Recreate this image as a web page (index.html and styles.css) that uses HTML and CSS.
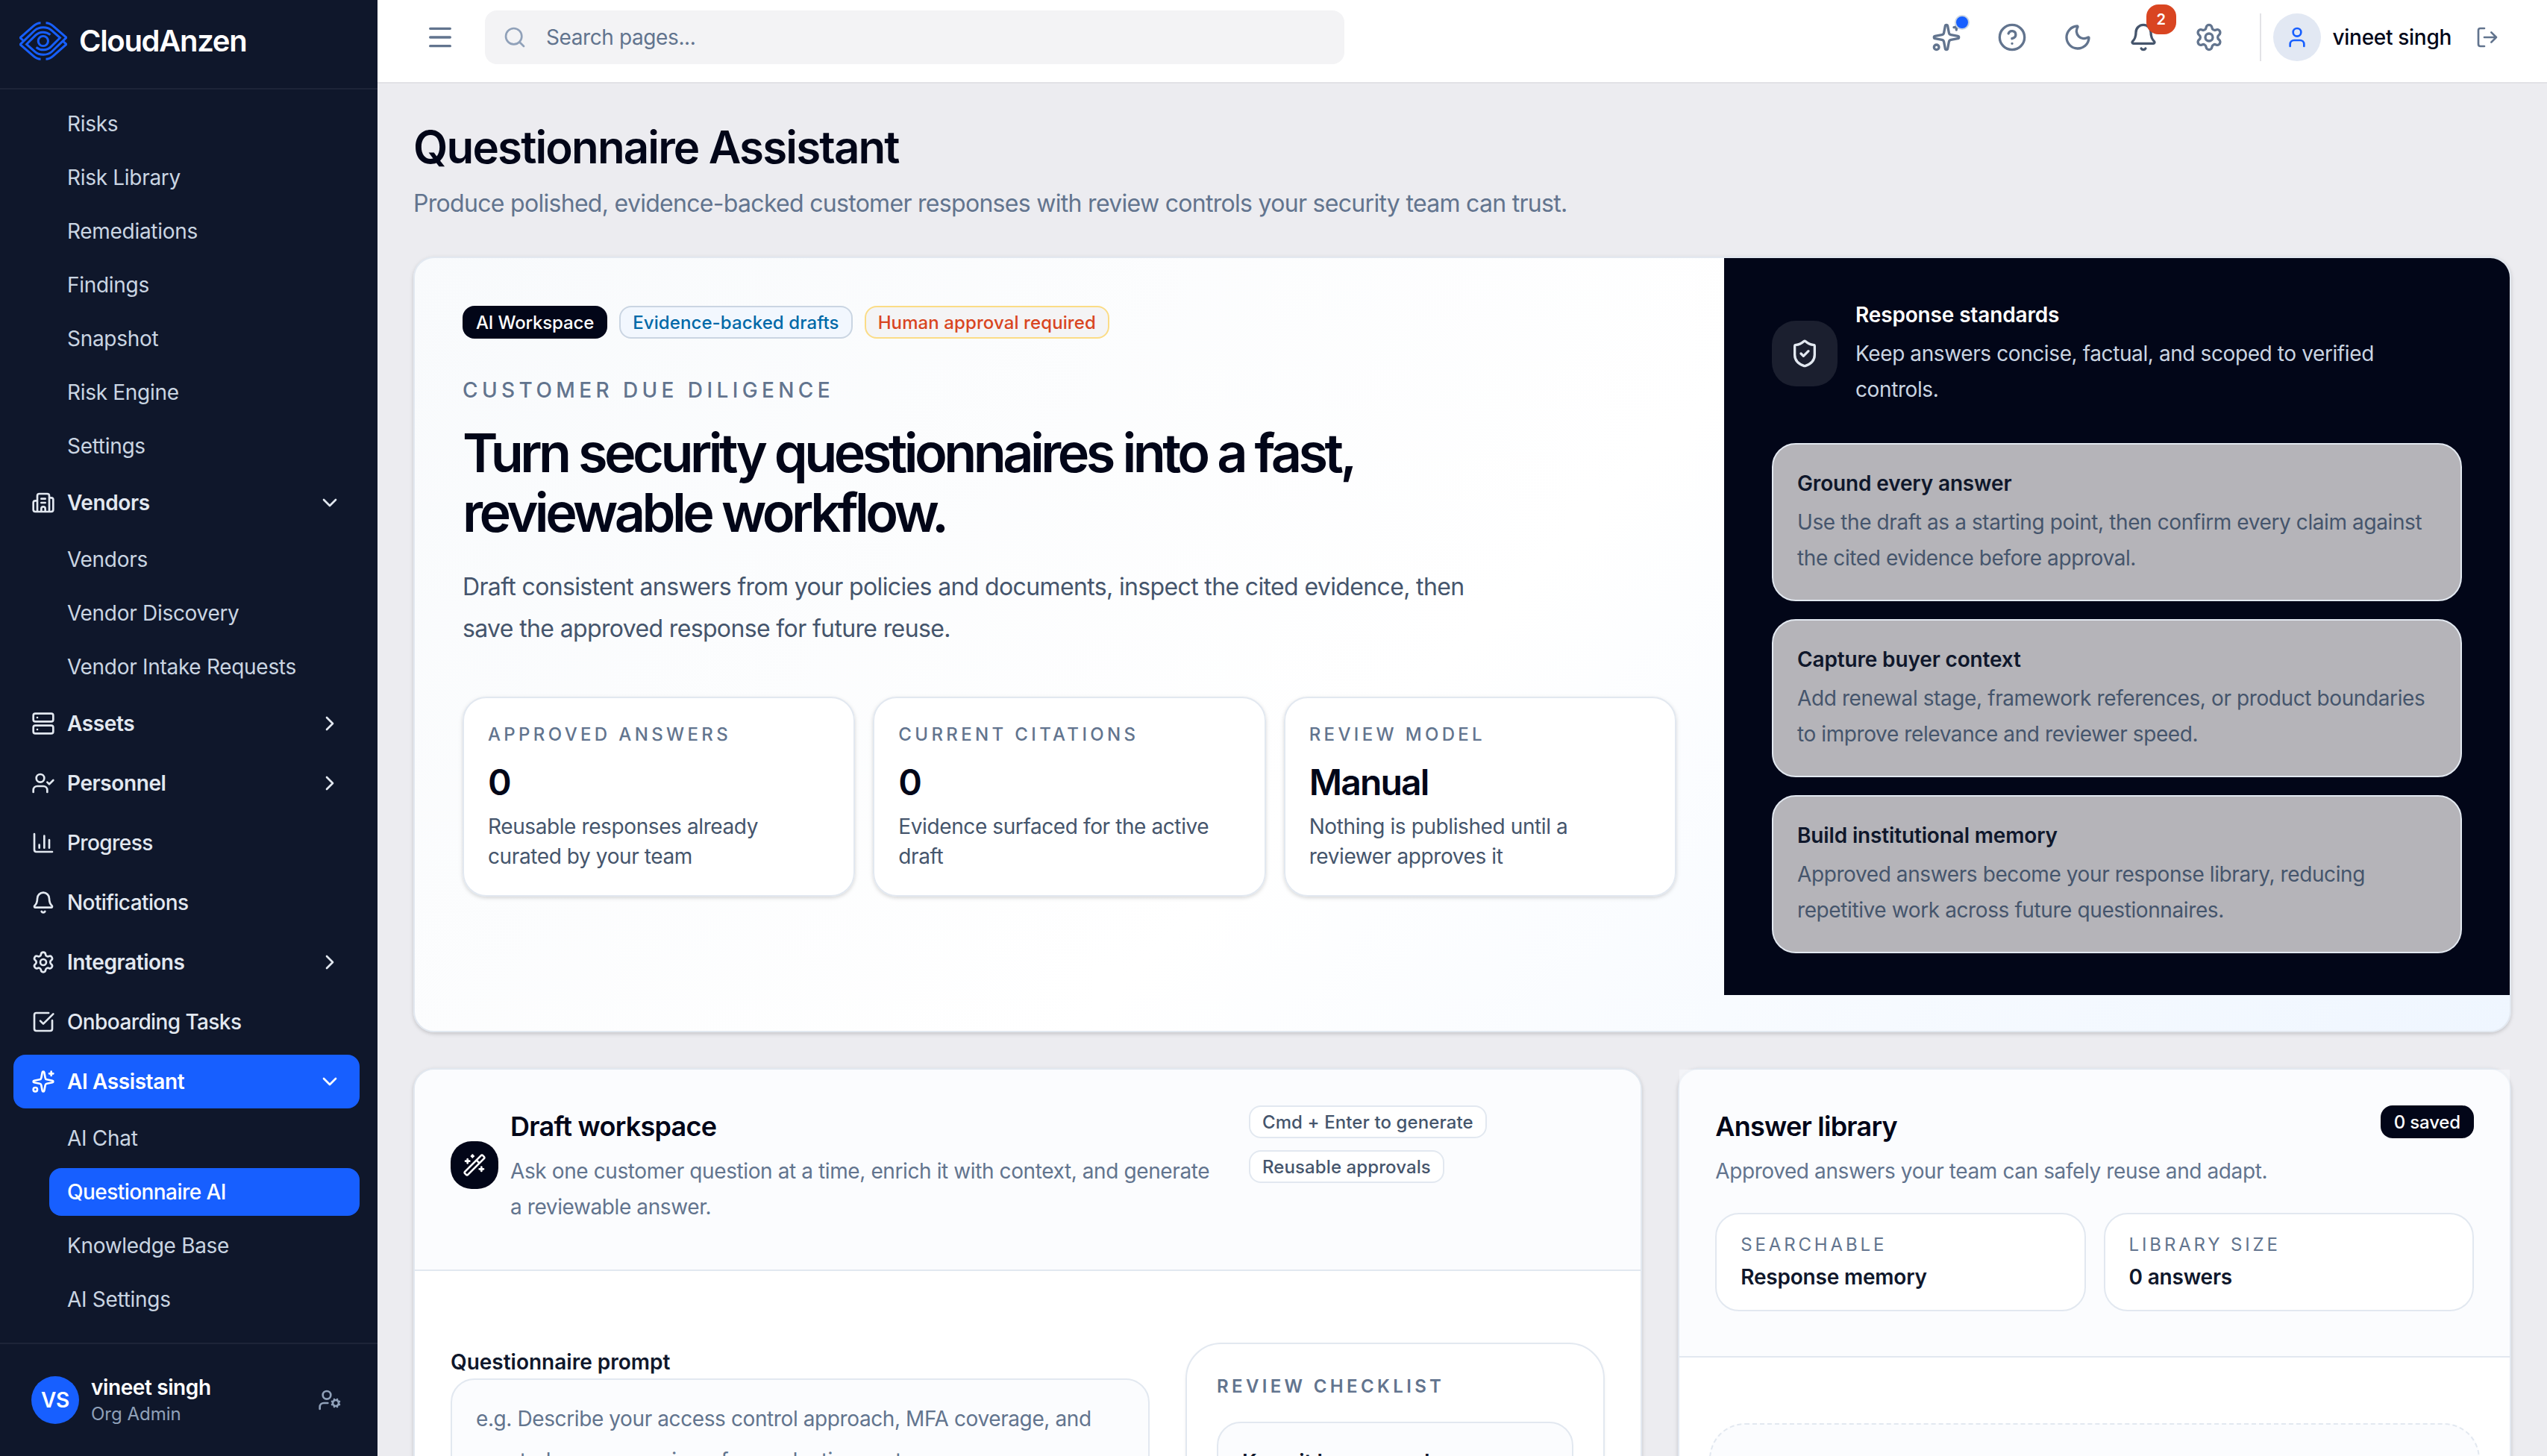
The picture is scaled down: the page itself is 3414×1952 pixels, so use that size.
FILE: index.html
```html
<!DOCTYPE html>
<html lang="en">
<head>
    <meta charset="UTF-8">
    <title>CloudAnzen - Questionnaire Assistant</title>
    <link rel="stylesheet" href="styles.css">
</head>
<body>
    <svg class="sprite" width="0" height="0">
        <symbol id="menu" viewBox="0 0 24 24"><path d="M4 5h16M4 12h16M4 19h16"/></symbol>
        <symbol id="search" viewBox="0 0 24 24"><path d="m21 21-4.34-4.34"/><circle cx="11" cy="11" r="8"/></symbol>
        <symbol id="sparkles" viewBox="0 0 24 24"><path d="M11.017 2.814a1 1 0 0 1 1.966 0l1.051 5.558a2 2 0 0 0 1.594 1.594l5.558 1.051a1 1 0 0 1 0 1.966l-5.558 1.051a2 2 0 0 0-1.594 1.594l-1.051 5.558a1 1 0 0 1-1.966 0l-1.051-5.558a2 2 0 0 0-1.594-1.594l-5.558-1.051a1 1 0 0 1 0-1.966l5.558-1.051a2 2 0 0 0 1.594-1.594zM20 2v4M22 4h-4"/><circle cx="4" cy="20" r="2"/></symbol>
        <symbol id="help" viewBox="0 0 24 24"><circle cx="12" cy="12" r="10"/><path d="M9.09 9a3 3 0 0 1 5.83 1c0 2-3 3-3 3M12 17h.01"/></symbol>
        <symbol id="moon" viewBox="0 0 24 24"><path d="M20.985 12.486a9 9 0 1 1-9.473-9.472c.405-.022.617.46.402.803a6 6 0 0 0 8.268 8.268c.344-.215.825-.004.803.401"/></symbol>
        <symbol id="bell" viewBox="0 0 24 24"><path d="M10.268 21a2 2 0 0 0 3.464 0M3.262 15.326A1 1 0 0 0 4 17h16a1 1 0 0 0 .74-1.673C19.41 13.956 18 12.499 18 8A6 6 0 0 0 6 8c0 4.499-1.411 5.956-2.738 7.326"/></symbol>
        <symbol id="gear" viewBox="0 0 24 24"><path d="M9.671 4.136a2.34 2.34 0 0 1 4.659 0 2.34 2.34 0 0 0 3.319 1.915 2.34 2.34 0 0 1 2.33 4.033 2.34 2.34 0 0 0 0 3.831 2.34 2.34 0 0 1-2.33 4.033 2.34 2.34 0 0 0-3.319 1.915 2.34 2.34 0 0 1-4.659 0 2.34 2.34 0 0 0-3.32-1.915 2.34 2.34 0 0 1-2.33-4.033 2.34 2.34 0 0 0 0-3.831A2.34 2.34 0 0 1 6.35 6.051a2.34 2.34 0 0 0 3.319-1.915"/><circle cx="12" cy="12" r="3"/></symbol>
        <symbol id="user" viewBox="0 0 24 24"><path d="M19 21v-2a4 4 0 0 0-4-4H9a4 4 0 0 0-4 4v2"/><circle cx="12" cy="7" r="4"/></symbol>
        <symbol id="logout" viewBox="0 0 24 24"><path d="m16 17 5-5-5-5M21 12H9M9 21H5a2 2 0 0 1-2-2V5a2 2 0 0 1 2-2h4"/></symbol>
        <symbol id="building" viewBox="0 0 24 24"><path d="M10 12h4M10 8h4M14 21v-3a2 2 0 0 0-4 0v3M6 10H4a2 2 0 0 0-2 2v7a2 2 0 0 0 2 2h16a2 2 0 0 0 2-2V9a2 2 0 0 0-2-2h-2M6 21V5a2 2 0 0 1 2-2h8a2 2 0 0 1 2 2v16"/></symbol>
        <symbol id="server" viewBox="0 0 24 24"><rect x="2" y="2" width="20" height="8" rx="2"/><rect x="2" y="14" width="20" height="8" rx="2"/><path d="M6 6h.01M6 18h.01"/></symbol>
        <symbol id="user-check" viewBox="0 0 24 24"><path d="m16 11 2 2 4-4M16 21v-2a4 4 0 0 0-4-4H6a4 4 0 0 0-4 4v2"/><circle cx="9" cy="7" r="4"/></symbol>
        <symbol id="chart" viewBox="0 0 24 24"><path d="M3 3v16a2 2 0 0 0 2 2h16M18 17V9M13 17V5M8 17v-3"/></symbol>
        <symbol id="check-square" viewBox="0 0 24 24"><path d="M21 10.656V19a2 2 0 0 1-2 2H5a2 2 0 0 1-2-2V5a2 2 0 0 1 2-2h12.344M9 11l3 3L22 4"/></symbol>
        <symbol id="chevron-down" viewBox="0 0 24 24"><path d="m6 9 6 6 6-6"/></symbol>
        <symbol id="chevron-right" viewBox="0 0 24 24"><path d="m9 18 6-6-6-6"/></symbol>
        <symbol id="user-cog" viewBox="0 0 24 24"><path d="M10 15H6a4 4 0 0 0-4 4v2M14.305 16.53l.923-.382M15.228 13.852l-.923-.383M16.852 12.228l-.383-.923M16.852 17.772l-.383.924M19.148 12.228l.383-.923M19.53 18.696l-.382-.924M20.772 13.852l.924-.383M20.772 16.148l.924.383"/><circle cx="18" cy="15" r="3"/><circle cx="9" cy="7" r="4"/></symbol>
        <symbol id="shield" viewBox="0 0 24 24"><path d="M20 13c0 5-3.5 7.5-7.66 8.95a1 1 0 0 1-.67-.01C7.5 20.5 4 18 4 13V6a1 1 0 0 1 1-1c2 0 4.5-1.2 6.24-2.72a1.17 1.17 0 0 1 1.52 0C14.51 3.81 17 5 19 5a1 1 0 0 1 1 1zM9 12l2 2 4-4"/></symbol>
        <symbol id="wand" viewBox="0 0 24 24"><path d="m21.64 3.64-1.28-1.28a1.21 1.21 0 0 0-1.72 0L2.36 18.64a1.21 1.21 0 0 0 0 1.72l1.28 1.28a1.2 1.2 0 0 0 1.72 0L21.64 5.36a1.2 1.2 0 0 0 0-1.72M14 7l3 3M5 6v4M19 14v4M10 2v2M7 8H3M21 16h-4M11 3H9"/></symbol>
    </svg>

    <aside class="sidebar">
        <div class="brand">
            <svg class="logo" viewBox="18 26 193 154">
                <path d="M104 30C92 30 84 34 74 43L21 90L37 104"/>
                <path d="M104 176C92 176 84 172 74 163L21 117L80 60C98 44 130 44 147 59L182 90L146 126C130 142 104 143 86 128"/>
                <path d="M125 30C137 30 145 34 155 43L208 89L149 146C131 162 99 162 82 147L47 116L83 80C99 64 125 63 143 78"/>
                <path d="M125 176C137 176 145 172 155 163L208 116L192 102"/>
                <circle cx="114" cy="103" r="20"/>
            </svg>
            <span>CloudAnzen</span>
        </div>
        <nav class="nav">
            <a class="sub">Risks</a>
            <a class="sub">Risk Library</a>
            <a class="sub">Remediations</a>
            <a class="sub">Findings</a>
            <a class="sub">Snapshot</a>
            <a class="sub">Risk Engine</a>
            <a class="sub">Settings</a>
            <a class="item group"><svg class="icon"><use href="#building"/></svg><span>Vendors</span><svg class="icon"><use href="#chevron-down"/></svg></a>
            <a class="sub">Vendors</a>
            <a class="sub">Vendor Discovery</a>
            <a class="sub">Vendor Intake Requests</a>
            <a class="item group"><svg class="icon"><use href="#server"/></svg><span>Assets</span><svg class="icon"><use href="#chevron-right"/></svg></a>
            <a class="item group"><svg class="icon"><use href="#user-check"/></svg><span>Personnel</span><svg class="icon"><use href="#chevron-right"/></svg></a>
            <a class="item"><svg class="icon"><use href="#chart"/></svg><span>Progress</span></a>
            <a class="item"><svg class="icon"><use href="#bell"/></svg><span>Notifications</span></a>
            <a class="item group"><svg class="icon"><use href="#gear"/></svg><span>Integrations</span><svg class="icon"><use href="#chevron-right"/></svg></a>
            <a class="item"><svg class="icon"><use href="#check-square"/></svg><span>Onboarding Tasks</span></a>
            <a class="item group active"><svg class="icon"><use href="#sparkles"/></svg><span>AI Assistant</span><svg class="icon"><use href="#chevron-down"/></svg></a>
            <a class="sub">AI Chat</a>
            <a class="sub active">Questionnaire AI</a>
            <a class="sub">Knowledge Base</a>
            <a class="sub">AI Settings</a>
        </nav>
        <div class="account">
            <div class="account-avatar">VS</div>
            <div class="account-text">
                <div class="account-name">vineet singh</div>
                <div class="account-role">Org Admin</div>
            </div>
            <svg class="icon"><use href="#user-cog"/></svg>
        </div>
    </aside>

    <div class="page">
        <header class="topbar">
            <svg class="icon icon-lg"><use href="#menu"/></svg>
            <div class="search"><svg class="icon"><use href="#search"/></svg><span>Search pages...</span></div>
            <div class="actions">
                <div class="action"><svg class="icon icon-lg"><use href="#sparkles"/></svg><i class="dot"></i></div>
                <div class="action"><svg class="icon icon-lg"><use href="#help"/></svg></div>
                <div class="action"><svg class="icon icon-lg"><use href="#moon"/></svg></div>
                <div class="action alerts"><svg class="icon icon-lg"><use href="#bell"/></svg><b class="count">2</b></div>
                <div class="action"><svg class="icon icon-lg"><use href="#gear"/></svg></div>
            </div>
            <div class="profile">
                <div class="profile-avatar"><svg class="icon"><use href="#user"/></svg></div>
                <span>vineet singh</span>
                <svg class="icon"><use href="#logout"/></svg>
            </div>
        </header>

        <main class="content">
            <h1>Questionnaire Assistant</h1>
            <p class="lead">Produce polished, evidence-backed customer responses with review controls your security team can trust.</p>

            <section class="card hero">
                <div class="hero-main">
                    <div class="badges">
                        <span class="badge dark">AI Workspace</span>
                        <span class="badge blue">Evidence-backed drafts</span>
                        <span class="badge amber">Human approval required</span>
                    </div>
                    <div class="eyebrow">CUSTOMER DUE DILIGENCE</div>
                    <h2>Turn security questionnaires into a fast,<br>reviewable workflow.</h2>
                    <p class="hero-text">Draft consistent answers from your policies and documents, inspect the cited evidence, then<br>save the approved response for future reuse.</p>
                    <div class="stats">
                        <div class="stat">
                            <div class="label">APPROVED ANSWERS</div>
                            <div class="value">0</div>
                            <p>Reusable responses already<br>curated by your team</p>
                        </div>
                        <div class="stat">
                            <div class="label">CURRENT CITATIONS</div>
                            <div class="value">0</div>
                            <p>Evidence surfaced for the active<br>draft</p>
                        </div>
                        <div class="stat">
                            <div class="label">REVIEW MODEL</div>
                            <div class="value">Manual</div>
                            <p>Nothing is published until a<br>reviewer approves it</p>
                        </div>
                    </div>
                </div>
                <div class="standards">
                    <div class="standards-head">
                        <div class="shield"><svg class="icon icon-lg"><use href="#shield"/></svg></div>
                        <div>
                            <h3>Response standards</h3>
                            <p>Keep answers concise, factual, and scoped to verified<br>controls.</p>
                        </div>
                    </div>
                    <div class="tip">
                        <h3>Ground every answer</h3>
                        <p>Use the draft as a starting point, then confirm every claim against<br>the cited evidence before approval.</p>
                    </div>
                    <div class="tip">
                        <h3>Capture buyer context</h3>
                        <p>Add renewal stage, framework references, or product boundaries<br>to improve relevance and reviewer speed.</p>
                    </div>
                    <div class="tip">
                        <h3>Build institutional memory</h3>
                        <p>Approved answers become your response library, reducing<br>repetitive work across future questionnaires.</p>
                    </div>
                </div>
            </section>

            <div class="columns">
                <section class="card draft">
                    <div class="card-head draft-head">
                        <div class="wand"><svg class="icon"><use href="#wand"/></svg></div>
                        <div class="draft-title">
                            <h4>Draft workspace</h4>
                            <p>Ask one customer question at a time, enrich it with context, and generate<br>a reviewable answer.</p>
                        </div>
                        <div class="draft-badges">
                            <span class="badge light">Cmd + Enter to generate</span>
                            <span class="badge light">Reusable approvals</span>
                        </div>
                    </div>
                    <div class="draft-body">
                        <div class="prompt">
                            <label>Questionnaire prompt</label>
                            <div class="textarea">e.g. Describe your access control approach, MFA coverage, and<br>quarterly access reviews for production systems.</div>
                        </div>
                        <div class="checklist">
                            <div class="label strong">REVIEW CHECKLIST</div>
                            <div class="check">Keep it buyer-ready</div>
                        </div>
                    </div>
                </section>

                <section class="card library">
                    <div class="card-head">
                        <div class="library-top">
                            <div>
                                <h4>Answer library</h4>
                                <p>Approved answers your team can safely reuse and adapt.</p>
                            </div>
                            <span class="badge dark">0 saved</span>
                        </div>
                        <div class="facts">
                            <div class="fact"><div class="label">SEARCHABLE</div><strong>Response memory</strong></div>
                            <div class="fact"><div class="label">LIBRARY SIZE</div><strong>0 answers</strong></div>
                        </div>
                    </div>
                    <div class="empty"></div>
                </section>
            </div>
        </main>
    </div>
</body>
</html>
```
FILE: styles.css
```css
* {
    box-sizing: border-box;
}

body {
    margin: 0;
    width: 3414px;
    height: 1952px;
    overflow: hidden;
    display: flex;
    font-family: Inter, "Liberation Sans", sans-serif;
    font-size: 28px;
    line-height: 40px;
    letter-spacing: -0.4px;
    color: #020618;
    background: #ececf0;
}

h1, h2, h3, h4, p {
    margin: 0;
    font-weight: 400;
}

.sprite {
    display: none;
}

.icon {
    width: 32px;
    height: 32px;
    flex: none;
    fill: none;
    stroke: currentColor;
    stroke-width: 2;
    stroke-linecap: round;
    stroke-linejoin: round;
}

.icon-lg {
    width: 40px;
    height: 40px;
}

/* sidebar */
.sidebar {
    width: 506px;
    height: 1952px;
    flex: none;
    display: flex;
    flex-direction: column;
    background: #0f172b;
    color: #e2e8f0;
}

.brand {
    height: 120px;
    flex: none;
    display: flex;
    align-items: center;
    gap: 16px;
    padding: 0 26px 9px;
    border-bottom: 2px solid #1d2438;
    color: #fff;
    font-size: 40px;
    font-weight: 600;
    letter-spacing: -1.3px;
}

.logo {
    width: 64px;
    height: 52px;
    fill: none;
    stroke: #175fff;
    stroke-width: 9;
}

.nav {
    flex: 1;
    display: flex;
    flex-direction: column;
    gap: 8px;
    padding: 14px 24px 0 18px;
    font-weight: 500;
}

.item {
    height: 72px;
    display: flex;
    align-items: center;
    gap: 16px;
    padding: 0 24px;
    border-radius: 16px;
    letter-spacing: -0.6px;
}

.item span {
    flex: 1;
}

.group {
    font-weight: 600;
    letter-spacing: -0.4px;
}

.sub {
    height: 64px;
    margin-left: 48px;
    padding: 12px 24px;
    border-radius: 16px;
    font-weight: 400;
    letter-spacing: -0.3px;
    color: #cad5e2;
}

.nav .active {
    background: #175fff;
    color: #fff;
}

.sub.active {
    font-weight: 500;
    letter-spacing: -0.55px;
}

.account {
    height: 152px;
    flex: none;
    display: flex;
    align-items: center;
    padding: 0 48px 0 42px;
    border-top: 2px solid #1d2438;
    color: #90a1b9;
}

.account-avatar {
    width: 64px;
    height: 64px;
    margin-right: 16px;
    border-radius: 50%;
    background: #175fff;
    color: #fff;
    font-weight: 600;
    line-height: 64px;
    text-align: center;
}

.account-text {
    flex: 1;
}

.account-name {
    color: #fff;
    font-weight: 600;
    line-height: 38px;
}

.account-role {
    font-size: 24px;
    line-height: 34px;
    letter-spacing: 0;
}

/* top bar */
.page {
    flex: 1;
    min-width: 0;
}

.topbar {
    height: 112px;
    display: flex;
    align-items: center;
    padding: 0 64px 10px 64px;
    border-bottom: 2px solid #e2e2e6;
    background: #fff;
    color: #62748e;
}

.search {
    width: 1152px;
    height: 72px;
    display: flex;
    align-items: center;
    gap: 26px;
    margin-left: 40px;
    padding-left: 24px;
    border-radius: 16px;
    background: #f3f3f5;
}

.search .icon {
    color: #90a1b9;
}

.actions {
    display: flex;
    gap: 16px;
    margin-left: auto;
}

.action {
    position: relative;
    width: 72px;
    height: 72px;
    padding: 16px;
}

.alerts {
    color: #45556c;
}

.dot {
    position: absolute;
    top: 6px;
    right: 5px;
    width: 20px;
    height: 20px;
    border: 2px solid #cad5e2;
    border-radius: 50%;
    background: #175fff;
}

.count {
    position: absolute;
    top: -8px;
    right: -8px;
    width: 40px;
    height: 40px;
    border-radius: 16px;
    background: #d94521;
    color: #fff;
    font-size: 20px;
    font-weight: 600;
    text-align: center;
}

.profile {
    height: 64px;
    display: flex;
    align-items: center;
    margin-left: 32px;
    padding-left: 16px;
    border-left: 2px solid #e2e2e6;
}

.profile-avatar {
    width: 64px;
    height: 64px;
    padding: 16px;
    border-radius: 50%;
    background: #e2e8f3;
    color: #175fff;
}

.profile-avatar .icon {
    display: block;
}

.profile span {
    margin: 0 32px 0 16px;
    color: #020618;
    font-weight: 500;
    letter-spacing: -0.3px;
}

/* content */
.content {
    padding: 48px;
}

h1 {
    font-size: 60px;
    font-weight: 600;
    line-height: 75px;
    letter-spacing: -1.85px;
}

.lead {
    margin: 14px 0 47px;
    font-size: 32px;
    line-height: 48px;
    letter-spacing: -0.7px;
    color: #62748e;
}

.card {
    border: 2px solid #e2e8f0;
    border-radius: 28px;
    background: #fff;
    box-shadow: 0 2px 6px rgba(0, 0, 0, 0.1), 0 2px 4px rgba(0, 0, 0, 0.08);
}

.hero {
    display: grid;
    grid-template-columns: minmax(0, 1.25fr) minmax(0, 0.75fr);
    height: 1040px;
    padding-bottom: 48px;
    overflow: hidden;
    background: linear-gradient(135deg, #f8fafc, #fff 50%, #eff6ff);
}

.hero-main {
    padding: 64px;
}

.badges {
    display: flex;
    gap: 16px;
}

.badge {
    display: inline-block;
    height: 44px;
    padding: 0 16px;
    border: 2px solid transparent;
    border-radius: 16px;
    font-size: 24px;
    font-weight: 500;
    line-height: 41px;
    letter-spacing: 0.1px;
    white-space: nowrap;
}

.badge.dark {
    background: #020618;
    color: #fff;
    letter-spacing: -0.15px;
}

.badge.blue {
    border-color: #cad5e2;
    background: #f2f7fe;
    color: #0069a8;
}

.badge.amber {
    border-color: #fbdc86;
    background: #f4f4f5;
    color: #d94521;
}

.badge.light {
    border-color: #e2e8f0;
    background: #fff;
    color: #45556c;
}

.eyebrow {
    margin-top: 49px;
    font-weight: 500;
    letter-spacing: 5.4px;
    color: #62748e;
}

h2 {
    margin-top: 24px;
    font-size: 72px;
    font-weight: 600;
    line-height: 80px;
    letter-spacing: -4.55px;
}

.hero-text {
    margin-top: 32px;
    font-size: 32px;
    line-height: 56px;
    letter-spacing: -0.64px;
    color: #45556c;
    white-space: nowrap;
}

.stats {
    display: grid;
    grid-template-columns: repeat(3, minmax(0, 1fr));
    gap: 24px;
    margin-top: 63px;
}

.stat {
    padding: 33px 32px 32px;
    border: 2px solid #e2e8f0;
    border-radius: 32px;
    background: rgba(255, 255, 255, 0.9);
    box-shadow: 0 2px 6px rgba(0, 0, 0, 0.1), 0 2px 4px rgba(0, 0, 0, 0.06);
    color: #45556c;
    white-space: nowrap;
}

.label {
    font-size: 24px;
    font-weight: 500;
    line-height: 32px;
    letter-spacing: 4.35px;
    color: #62748e;
}

.label.strong {
    font-weight: 600;
}

.value {
    margin: 16px 0 7px;
    font-size: 48px;
    font-weight: 600;
    line-height: 64px;
    letter-spacing: -1.8px;
    color: #020618;
}

.standards {
    display: flex;
    flex-direction: column;
    gap: 24px;
    padding: 56px 64px;
    background: #020618;
    color: #cad5e2;
    line-height: 48px;
    white-space: nowrap;
}

.standards-head {
    display: flex;
    align-items: center;
    gap: 24px;
    margin-bottom: 24px;
}

.shield {
    width: 88px;
    height: 88px;
    padding: 24px;
    border-radius: 32px;
    background: #1b1f2f;
    color: #e2e8f0;
}

.shield .icon {
    display: block;
}

h3 {
    margin-bottom: 8px;
    font-size: 28px;
    font-weight: 600;
    line-height: 40px;
    letter-spacing: -0.15px;
}

.standards-head h3 {
    color: #fff;
}

.tip {
    height: 212px;
    padding: 32px;
    border: 2px solid #e2e8f0;
    border-radius: 32px;
    background: #b5b4b9;
    color: #45556c;
}

.tip h3 {
    color: #0f172b;
}

.columns {
    display: grid;
    grid-template-columns: minmax(0, 1.18fr) minmax(0, 0.8fr);
    gap: 48px;
    margin-top: 48px;
}

.columns .card {
    height: 1400px;
}

.card-head {
    padding: 48px 48px 60px;
    border-bottom: 2px solid #e2e8f0;
    background: rgba(248, 250, 253, 0.6);
    white-space: nowrap;
}

.card-head p {
    margin-top: 8px;
    line-height: 48px;
    color: #62748e;
}

h4 {
    font-size: 36px;
    font-weight: 600;
    line-height: 56px;
    letter-spacing: -0.75px;
}

.draft {
    overflow: hidden;
}

.draft-head {
    display: flex;
}

.wand {
    align-self: center;
    width: 64px;
    height: 64px;
    margin-right: 16px;
    padding: 16px;
    border-radius: 28px;
    background: #020618;
    color: #fff;
}

.wand .icon {
    display: block;
}

.draft-title {
    width: 990px;
}

.draft-badges {
    display: flex;
    flex-direction: column;
    align-items: flex-start;
    gap: 16px;
}

.draft-body {
    display: grid;
    grid-template-columns: minmax(0, 1.25fr) minmax(0, 0.75fr);
    gap: 48px;
    padding: 96px 48px;
}

.prompt {
    padding-top: 6px;
}

.prompt label {
    display: block;
    margin-bottom: 2px;
    color: #0f172b;
    font-weight: 600;
    letter-spacing: 0;
}

.textarea {
    height: 320px;
    padding: 24px 32px;
    border: 2px solid #e2e8f0;
    border-radius: 32px;
    background: #fbfcfe;
    color: #62748e;
    line-height: 56px;
    white-space: nowrap;
}

.checklist {
    padding: 41px 40px;
    border: 2px solid #e2e8f0;
    border-radius: 48px;
    box-shadow: 0 2px 4px rgba(0, 0, 0, 0.05);
}

.check {
    height: 200px;
    margin-top: 31px;
    padding: 32px;
    border: 2px solid #e2e8f0;
    border-radius: 32px;
    background: #fbfcfe;
    color: #0f172b;
    font-weight: 600;
    letter-spacing: 0;
}

.library-top {
    display: flex;
    align-items: flex-start;
    justify-content: space-between;
}

.facts {
    display: grid;
    grid-template-columns: 1fr 1fr;
    gap: 24px;
    margin-top: 32px;
}

.fact {
    height: 132px;
    padding: 25px 32px 24px;
    border: 2px solid #e2e8f0;
    border-radius: 32px;
    background: #fff;
}

.fact .label {
    margin-bottom: 7px;
    font-weight: 400;
    letter-spacing: 3.85px;
}

.fact strong {
    display: block;
    color: #0f172b;
    font-weight: 600;
    letter-spacing: -0.2px;
}

.empty {
    height: 400px;
    margin: 88px 40px 0;
    border: 2px dashed #e2e8f0;
    border-radius: 48px;
    background: #fbfcfe;
}
```
